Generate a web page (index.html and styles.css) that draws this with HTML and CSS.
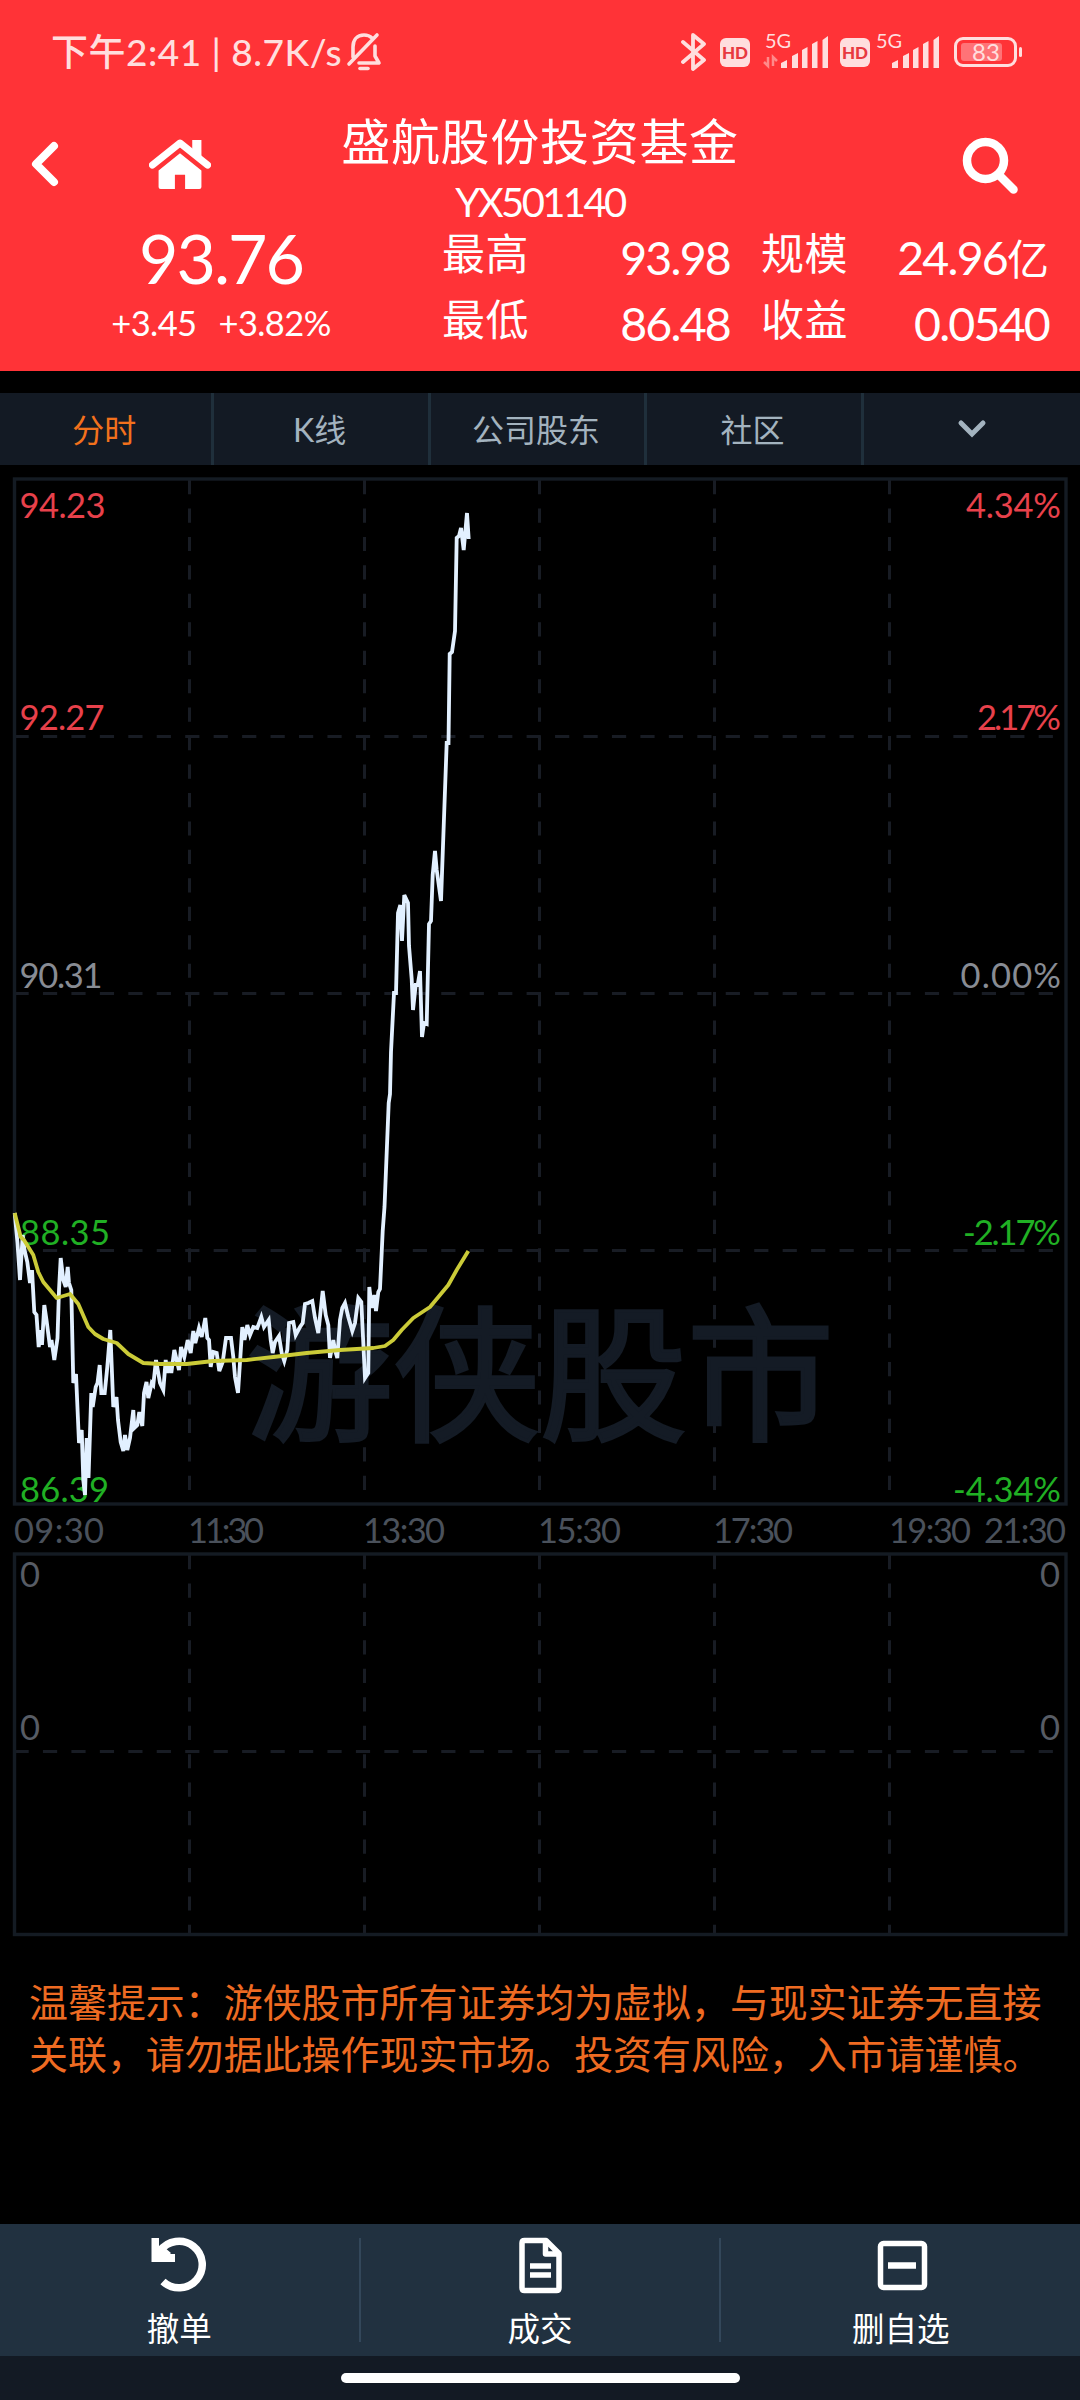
FILE: index.html
```html
<!DOCTYPE html>
<html lang="zh-CN">
<head>
    <meta charset="UTF-8">
    <meta name="viewport" content="width=device-width, initial-scale=1.0">
    <title>盛航股份投资基金</title>
    <link rel="stylesheet" href="styles.css">
</head>
<body>
    <header class="top">
        <div class="status">
            <span class="clock">下午2:41 | 8.7K/s</span>
            <svg class="bell" width="36" height="40" viewBox="0 0 36 40" fill="none" stroke="#ffdede" stroke-width="3.6" stroke-linecap="round" stroke-linejoin="round">
                <path d="M7 25V15C7 8 11 3 18 3c3 0 6 1 8 3M29 14v10l4 7H13M3 32L31 3"/>
                <path d="M14 36.500h8"/>
            </svg>
            <div class="status-right">
                <svg class="bt" width="26" height="40" viewBox="0 0 26 40" fill="none" stroke="#ffdede" stroke-width="3.8" stroke-linejoin="round" stroke-linecap="round">
                    <path d="M2 10L23 28L12 37V3L23 12L2 30"/>
                </svg>
                <span class="hd">HD</span>
                <svg class="signal first" width="66" height="42" viewBox="0 0 66 42" fill="#ffdede">
                    <text x="2" y="19" class="net" textLength="26">5G</text>
                    <path d="M18 39v-5l6-3v8zM29 39V27l6-3v15zM39 39V21l5.500-3v21zM49 39V15l5.500-3v27zM59.500 39V11l5.500-4v32z"/>
                    <path d="M5 28v9l-4-4M10 37v-9l4 4" fill="none" stroke="#ff8a8a" stroke-width="2.500"/>
                </svg>
                <span class="hd">HD</span>
                <svg class="signal" width="66" height="42" viewBox="0 0 66 42" fill="#ffdede">
                    <text x="2" y="19" class="net" textLength="26">5G</text>
                    <path d="M18 39v-5l6-3v8zM29 39V27l6-3v15zM39 39V21l5.500-3v21zM49 39V15l5.500-3v27zM59.500 39V11l5.500-4v32z"/>
                </svg>
                <div class="battery"><span>83</span></div>
            </div>
        </div>

        <div class="title-bar">
            <svg class="back" width="31" height="50" viewBox="0 0 31 50" fill="none" stroke="#fff" stroke-width="8" stroke-linecap="round">
                <path d="M25 7L7 25L25 43" stroke-linejoin="round"/>
            </svg>
            <svg class="home" width="62" height="51" viewBox="0 0 60 50" fill="#fff">
                <path d="M3 25.500L30 4L57 25.500" fill="none" stroke="#fff" stroke-width="7" stroke-linecap="round" stroke-linejoin="round"/>
                <path d="M42 1h9v17l-9-7z"/>
                <path d="M30 14L51 31v16q0 2-2 2H35V35H25v14H11q-2 0-2-2V31z"/>
            </svg>
            <div class="title">
                <h1>盛航股份投资基金</h1>
                <p>YX501140</p>
            </div>
            <svg class="search" width="58" height="60" viewBox="0 0 58 60" fill="none" stroke="#fff">
                <circle cx="23.500" cy="25.500" r="18.500" stroke-width="8.500"/>
                <path d="M38 41L51.500 54.500" stroke-width="8.500" stroke-linecap="round"/>
            </svg>
        </div>

        <div class="quote">
            <div class="now">
                <div class="price">93.76</div>
                <div class="change"><span>+3.45</span><span>+3.82%</span></div>
            </div>
            <dl class="figures">
                <dt>最高</dt><dd>93.98</dd>
                <dt>规模</dt><dd>24.96<small>亿</small></dd>
                <dt>最低</dt><dd>86.48</dd>
                <dt>收益</dt><dd>0.0540</dd>
            </dl>
        </div>
    </header>

    <nav class="tabs">
        <a class="active">分时</a>
        <a>K线</a>
        <a>公司股东</a>
        <a>社区</a>
        <a>
            <svg width="30" height="20" viewBox="0 0 30 20" fill="none" stroke="#a3b3bf" stroke-width="5" stroke-linecap="round"><path d="M4 4l11 11L26 4"/></svg>
        </a>
    </nav>

    <!-- 分时图 + 成交量 -->
    <svg class="chart" width="1080" height="1475" viewBox="0 465 1080 1475">
        <g class="grid">
            <path d="M189.500 480V1504M364.500 480V1504M539.500 480V1504M714.500 480V1504M889.500 480V1504"/>
            <path d="M14.500 736.500H1065M14.500 993.500H1065M14.500 1250.500H1065"/>
            <path d="M189.500 1555V1934M364.500 1555V1934M539.500 1555V1934M714.500 1555V1934M889.500 1555V1934"/>
            <path d="M14.500 1751.500H1065"/>
        </g>
        <text class="watermark" x="540" y="1429" text-anchor="middle">游侠股市</text>
        <g class="frame">
            <rect x="14.500" y="479" width="1051.500" height="1025"/>
            <rect x="14.500" y="1554" width="1051.500" height="380.500"/>
        </g>

        <g class="up">
            <text x="19.500" y="518" textLength="86">94.23</text>
            <text x="19.500" y="730" textLength="85">92.27</text>
            <text x="966" y="518" textLength="95">4.34%</text>
            <text x="977" y="730" textLength="84">2.17%</text>
        </g>
        <g class="flat">
            <text x="19.500" y="987.500" textLength="83">90.31</text>
            <text x="960.500" y="987.500" textLength="100.500">0.00%</text>
        </g>
        <g class="down">
            <text x="20" y="1245" textLength="90">88.35</text>
            <text x="20" y="1502" textLength="89">86.39</text>
            <text x="963" y="1245" textLength="98">-2.17%</text>
            <text x="953" y="1502" textLength="108">-4.34%</text>
        </g>
        <g class="time">
            <text x="14" y="1543" textLength="90">09:30</text>
            <text x="188" y="1543" textLength="76">11:30</text>
            <text x="363" y="1543" textLength="82">13:30</text>
            <text x="538" y="1543" textLength="83">15:30</text>
            <text x="713" y="1543" textLength="80">17:30</text>
            <text x="889" y="1543" textLength="82">19:30</text>
            <text x="984" y="1543" textLength="82">21:30</text>
        </g>
        <g class="volume">
            <text x="20" y="1586.500">0</text>
            <text x="1060" y="1586.500" text-anchor="end">0</text>
            <text x="20" y="1740">0</text>
            <text x="1060" y="1740" text-anchor="end">0</text>
        </g>

        <polyline class="price-line" points="14.7,1213 17.5,1243 20,1280 22.7,1235 24.5,1250 27.3,1262 30,1283 32,1270 34.3,1312 36.5,1315 38.7,1347 41.3,1330 42,1345 44.3,1305 46.5,1320 50,1347 51.5,1340 54.3,1360 57.5,1338 59,1290 60.7,1258 63.3,1280 65.7,1287 67.7,1267 69,1283 71.3,1290 73.3,1383 76,1374 79,1443 81.7,1430 83.3,1480 85,1495 86.7,1438 88.5,1478 91.3,1393 92.7,1407 95.7,1387 97.5,1383 99.7,1365 101.3,1393 104.7,1393 107.3,1367 110.3,1330 113.3,1407 116.5,1397 118,1420 120.7,1442 123.3,1451 125,1435 127.3,1450 130,1438 133.3,1410 134.3,1428 137.3,1425 139.3,1412 142.3,1426 144,1393 146.5,1382 148.3,1398 151.7,1383 153.3,1385 156,1360 160,1383 163.3,1390 165.7,1360 167.3,1373 169.3,1362 171.3,1373 174.3,1350 179,1370 181,1347 184.3,1357 187.7,1340 190.7,1353 193.3,1331 195.3,1343 199,1328 201.7,1337 205.3,1318 207.3,1338 209,1340 210.7,1367 213.3,1352 216.7,1353 219.3,1371 222.7,1362 226,1338 231,1338 233.3,1357 235,1377 238,1393 239.7,1367 242.3,1327 244.5,1340 247.3,1325 250,1335 253.3,1327 257.3,1328 261.3,1317 264,1327 268.7,1320 270.7,1340 272.7,1353 275,1342 279,1336 281.7,1353 284.3,1361 287.3,1350 289,1323 293.3,1322 295.7,1335 300,1327 302.7,1323 305,1304 308.3,1303 312.3,1301 315,1318 318.3,1333 322.7,1291 325.7,1315 328.3,1325 330,1358 333.3,1340 335,1350 337.3,1358 340,1320 342.3,1308 345,1303 348.3,1317 352.3,1331 355,1323 358.3,1298 361.3,1302 365,1378 368.3,1373 369.3,1287 371.7,1308 374.3,1295 376,1311 378.3,1292 380,1289 382.7,1231 384.5,1207 388.7,1103 390,1094 391,1052 394,993 396,993 398,913 400.3,905 402,941 404.3,895 408,903 409,946 411.7,979 413,1010 415.7,985 417.7,985 420,971 422,1037 424,1023 426.7,1024 429,924 431,921 432.7,875 435,851 436.7,870 441,901 446.7,743 448.5,743 449.7,654 452,652 455,631 456.7,538 459,536 461,528 463.7,550 467,513 468.7,539"/>
        <polyline class="avg-line" points="14.7,1213 20.7,1237 24,1240 33.3,1255 38.3,1272 43.3,1282 56.7,1298 70,1294 78.3,1304 88.3,1327 95,1334 103.3,1339 116.7,1343 128.3,1354 143.3,1363 160,1364 186.7,1364 213.3,1361 246.7,1360 273.3,1357 306.7,1353 340,1350 373.3,1348 385,1346 393.3,1340 401.7,1330 413.3,1318 430,1307 440,1295 448.3,1285 456.7,1270 468.3,1251"/>
    </svg>

    <p class="tip">温馨提示：游侠股市所有证券均为虚拟，与现实证券无直接<br>关联，请勿据此操作现实市场。投资有风险，入市请谨慎。</p>

    <footer class="actions">
        <button>
            <svg width="60" height="60" viewBox="0 0 60 60" fill="none" stroke="#fff" stroke-width="7.500">
                <path d="M11 16A23.300 23.300 0 1 1 14 46.500"/>
                <path d="M2.500 3h7.500v12l5-3 7 6-1 1h5v8H2.500z" fill="#fff" stroke="none"/>
            </svg>
            <span>撤单</span>
        </button>
        <button>
            <svg width="60" height="60" viewBox="0 0 60 60" fill="none" stroke="#fff" stroke-width="5.500" stroke-linejoin="round">
                <path d="M14.500 5.500H36L49 18.500V53q0 2.500-2.500 2.500h-32q-2.500 0-2.500-2.500V8q0-2.500 2.500-2.500zM35.500 6V19H48M20 31h21M20 40h21"/>
            </svg>
            <span>成交</span>
        </button>
        <button>
            <svg width="60" height="60" viewBox="0 0 60 60" fill="none" stroke="#fff" stroke-width="5.500">
                <rect x="9.500" y="8.500" width="44" height="44" rx="3"/>
                <path d="M17 30.500h28" stroke-width="6.500"/>
            </svg>
            <span>删自选</span>
        </button>
    </footer>
    <div class="home-bar"><i></i></div>
</body>
</html>
```
FILE: styles.css
```css
* {
    margin: 0;
    padding: 0;
    box-sizing: border-box;
}

body {
    width: 1080px;
    height: 2400px;
    background: #000;
    color: #fff;
    font-family: Lato, "Noto Sans CJK SC", sans-serif;
    display: flex;
    flex-direction: column;
    overflow: hidden;
}

svg {
    display: block;
    flex: none;
}

/* header */
.top {
    height: 371px;
    background: #ff3337;
    flex: none;
}

.status {
    display: flex;
    align-items: center;
    height: 104px;
    padding: 0 63px 0 51px;
    color: #ffdede;
}

.clock {
    width: 295px;
    font-size: 37px;
    line-height: 40px;
    letter-spacing: 0.5px;
    font-weight: 500;
    white-space: nowrap;
}

.status-right {
    display: flex;
    align-items: center;
    margin-left: auto;
}

.hd {
    width: 30px;
    height: 29px;
    margin-left: 11px;
    border-radius: 6px;
    background: #ffdede;
    color: #e83840;
    font-size: 17px;
    font-weight: 900;
    line-height: 29px;
    text-align: center;
}

.bt {
    margin-right: 2px;
}

.signal {
    margin-left: 4px;
    margin-top: -4px;
}

.signal.first {
    margin-left: 13px;
}

.net {
    font-size: 20px;
}

.battery {
    position: relative;
    width: 63px;
    height: 30px;
    margin-left: 14px;
    border: 3px solid #ffdede;
    border-radius: 9px;
    padding: 3px 12px 3px 4px;
}

.battery span {
    display: block;
    height: 18px;
    background: #ff7377;
    border-radius: 3px;
    font-size: 24px;
    line-height: 18px;
    text-indent: 11px;
}

.battery::after {
    content: "";
    position: absolute;
    right: -8px;
    top: 7px;
    width: 3px;
    height: 10px;
    border-radius: 2px;
    background: #ffdede;
}

.title-bar {
    display: flex;
    height: 121px;
    padding: 0 60px 0 29px;
}

.back {
    margin-top: 35px;
}

.home {
    margin: 35px 0 0 89px;
}

.title {
    width: 420px;
    margin-left: 119px;
    text-align: center;
}

.title h1 {
    font-size: 49px;
    font-weight: 400;
    letter-spacing: 0.7px;
    line-height: 74px;
    white-space: nowrap;
}

.title p {
    font-size: 40px;
    line-height: 48px;
    letter-spacing: -2.6px;
    margin-top: 0;
}

.search {
    margin: 31px 0 0 auto;
}

.quote {
    display: flex;
    height: 146px;
}

.now {
    width: 442px;
    text-align: center;
}

.price {
    font-size: 68px;
    line-height: 66px;
    letter-spacing: -2px;
}

.change {
    display: flex;
    justify-content: center;
    gap: 22px;
    font-size: 34.5px;
    line-height: 64px;
    letter-spacing: -0.6px;
}

/* label / value pairs, two per row */
.figures {
    display: grid;
    grid-template-columns: 90px 198px 120px 199px;
    grid-template-rows: 66px 66px;
}

.figures dt {
    font-size: 43px;
    line-height: 58px;
    letter-spacing: 0.5px;
    white-space: nowrap;
}

.figures dt:nth-of-type(even) {
    margin-left: 31px;
}

.figures dd {
    font-size: 46.5px;
    line-height: 64px;
    letter-spacing: -1.8px;
    text-align: right;
    white-space: nowrap;
}

.figures small {
    font-size: 42px;
    letter-spacing: 0;
}

/* tabs */
.tabs {
    display: flex;
    flex: none;
    height: 72px;
    margin-top: 22px;
    background: #131a24;
}

.tabs a {
    width: 217px;
    display: flex;
    align-items: center;
    justify-content: center;
    border-right: 3px solid #1f2f3b;
    padding: 0 3px 3px 0;
    color: #a3b3bf;
    font-size: 32px;
}

.tabs a:first-child {
    width: 215px;
}

.tabs a:last-child {
    border-right: none;
    padding: 0;
}

.tabs .active {
    color: #f3711c;
}

/* chart */
.chart text {
    font-size: 34.5px;
}

.grid {
    fill: none;
    stroke: #181c24;
    stroke-width: 3;
    stroke-dasharray: 14.2 14.25;
}

.frame {
    fill: none;
    stroke: #141b23;
    stroke-width: 3.4;
}

.chart .watermark {
    font-size: 147px;
    fill: #141b25;
    stroke: #141b25;
    stroke-width: 3.5;
}

.up { fill: #e8414b; }
.flat { fill: #888c94; }
.down { fill: #20b024; }
.time { fill: #4a515b; }
.volume { fill: #575c65; }

.price-line {
    fill: none;
    stroke: #e2f0ff;
    stroke-width: 3.8;
}

.avg-line {
    fill: none;
    stroke: #cbcb38;
    stroke-width: 3.8;
    stroke-linejoin: round;
}

.tip {
    margin: 34px 0 0 29px;
    color: #ee6b22;
    font-size: 38.95px;
    line-height: 52px;
    white-space: nowrap;
    font-family: "Noto Sans CJK SC", sans-serif;
}

/* bottom */
.actions {
    display: flex;
    flex: none;
    height: 132px;
    margin-top: auto;
    padding: 14px 0;
    background: #213140;
}

.actions button {
    flex: 1 0 0;
    display: flex;
    flex-direction: column;
    align-items: center;
    border: none;
    border-right: 2px solid #33475a;
    background: none;
    color: #fff;
    font-family: inherit;
    font-size: 32.5px;
    line-height: 26px;
}

.actions button:last-child {
    border-right: none;
}

.actions svg {
    margin-top: -3px;
    margin-bottom: 21px;
}

.home-bar {
    flex: none;
    height: 44px;
    background: #131a24;
    padding-top: 17px;
}

.home-bar i {
    display: block;
    width: 399px;
    height: 10px;
    margin: 0 auto;
    border-radius: 5px;
    background: #fff;
}
```
